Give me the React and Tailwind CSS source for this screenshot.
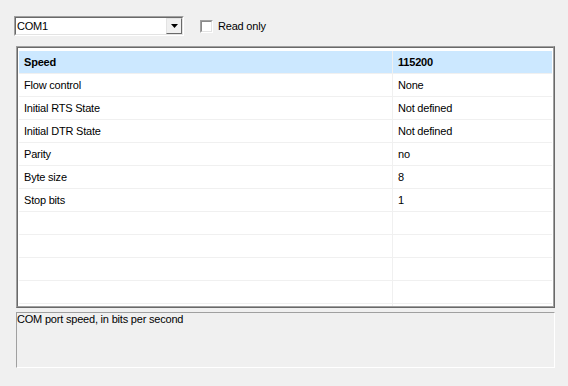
import React from "react";

const rows = [
  ["Speed", "115200", true],
  ["Flow control", "None"],
  ["Initial RTS State", "Not defined"],
  ["Initial DTR State", "Not defined"],
  ["Parity", "no"],
  ["Byte size", "8"],
  ["Stop bits", "1"],
  ["", ""],
  ["", ""],
  ["", ""],
  ["", ""],
  ["", ""],
];

export default function App() {
  return (
    <div
      className="w-[568px] h-[386px] bg-[#f0f0f0] text-black text-[11px] tracking-[-0.2px] overflow-hidden"
      style={{ fontFamily: '"Liberation Sans", Arial, sans-serif' }}
    >
      {/* top bar */}
      <div className="flex items-center pt-[16px] pl-[14px]">
        <div className="w-[170px] h-[20px] border border-t-[#a0a0a0] border-l-[#a0a0a0] border-b-white border-r-white">
          <div className="w-full h-full border border-t-[#696969] border-l-[#696969] border-b-[#e3e3e3] border-r-[#e3e3e3] bg-white flex items-center">
            <span className="flex-1 pl-[1px] leading-[13px]">COM1</span>
            <div className="w-[16px] h-[16px] bg-[#f0f0f0] border border-t-[#e3e3e3] border-l-[#e3e3e3] border-b-[#696969] border-r-[#696969] flex items-center justify-center">
              <svg width="7" height="4" viewBox="0 0 7 4">
                <path d="M0 0H7L3.5 4Z" fill="#000" />
              </svg>
            </div>
          </div>
        </div>
        <div className="ml-[16px] w-[13px] h-[13px] border border-t-[#a0a0a0] border-l-[#a0a0a0] border-b-white border-r-white">
          <div className="w-full h-full border border-t-[#8a8a8a] border-l-[#8a8a8a] border-b-[#e3e3e3] border-r-[#e3e3e3] bg-white" />
        </div>
        <span className="ml-[5px] leading-[13px]">Read only</span>
      </div>

      {/* property grid */}
      <div className="mt-[10px] ml-[16px] w-[539px] h-[262px] border border-t-[#a0a0a0] border-l-[#a0a0a0] border-b-[#696969] border-r-[#696969]">
        <div className="w-full h-full border border-t-[#696969] border-l-[#696969] border-b-[#a0a0a0] border-r-[#a0a0a0] bg-white pt-[3px] px-[1px] overflow-hidden">
          {rows.map(([k, v, sel], i) => (
            <div
              key={i}
              className={`flex h-[23px] border-b border-[#f0f0f0] ${sel ? "bg-[#cce8ff] font-bold" : ""}`}
            >
              <div className="w-[374px] shrink-0 border-r border-[#f0f0f0] pl-[5px] flex items-center">
                {k}
              </div>
              <div className="flex-1 pl-[5px] flex items-center">{v}</div>
            </div>
          ))}
        </div>
      </div>

      {/* description */}
      <div className="mt-[4px] ml-[16px] w-[539px] h-[56px] border border-t-[#a0a0a0] border-l-[#a0a0a0] border-b-white border-r-white">
        <div className="leading-[13px]">COM port speed, in bits per second</div>
      </div>
    </div>
  );
}
